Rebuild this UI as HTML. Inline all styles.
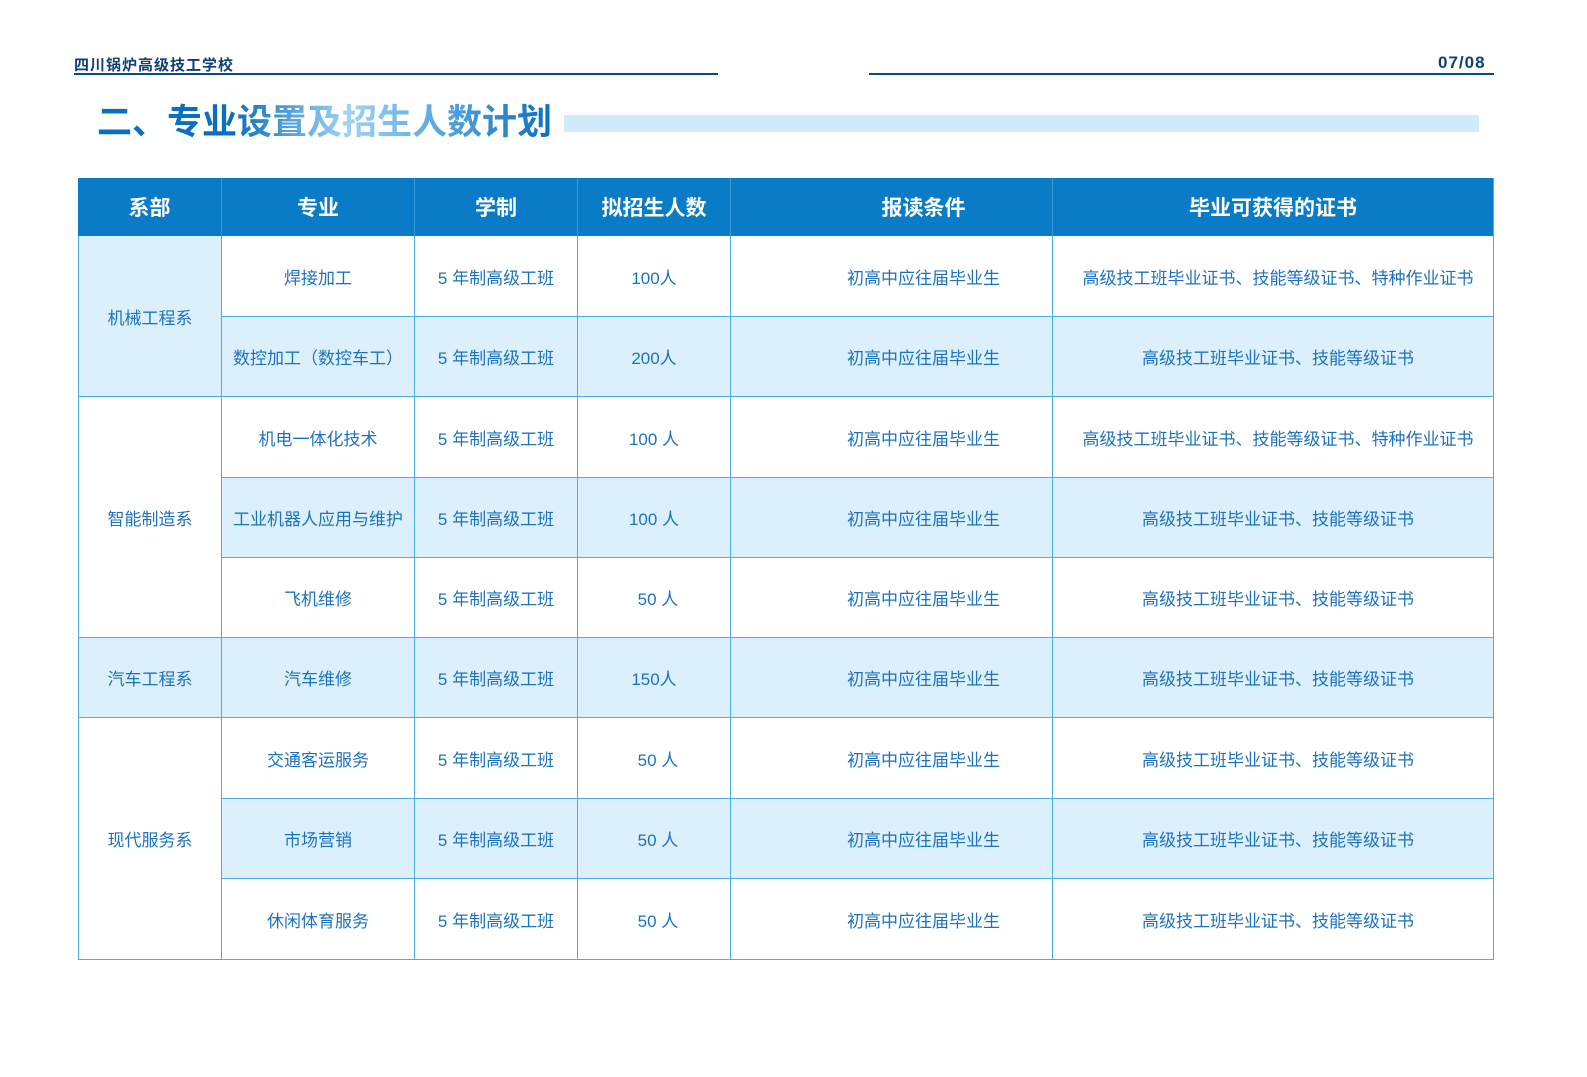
<!DOCTYPE html>
<html><head><meta charset="utf-8"><style>
*{margin:0;padding:0;box-sizing:border-box}
body{width:1587px;height:1077px;background:#fff;position:relative;overflow:hidden;font-family:"Liberation Sans","Noto Sans CJK SC",sans-serif}
.a{position:absolute}
.c{position:absolute;display:flex;align-items:center;justify-content:center;color:#1d72bf;font-size:17px;border-right:1px solid #4aaee0;border-bottom:1px solid #4aaee0}
.h{color:#fff;font-size:21px;font-weight:bold;background:#0a7bc6;border-right:1px solid #3a9ad8;border-bottom:none}
.l{background:#dcf0fb}
</style></head><body>
<div class="a" style="left:74px;top:54px;font-size:15px;font-weight:bold;color:#0d3f78;letter-spacing:1px">四川锅炉高级技工学校</div>
<div class="a" style="left:74px;top:73px;width:644px;height:2px;background:#0d4a85"></div>
<div class="a" style="left:869px;top:73px;width:625px;height:2px;background:#0d4a85"></div>
<div class="a" style="left:1438px;top:53px;font-size:17px;font-weight:bold;color:#0d3f78;letter-spacing:1px">07/08</div>
<div class="a" style="left:97px;top:101px;font-size:35px;font-weight:bold;line-height:44px;background:linear-gradient(90deg,#0a6fc0 0%,#0a6fc0 30%,#9fd4f4 55%,#5aa8e0 75%,#0a6fc0 100%);-webkit-background-clip:text;background-clip:text;color:transparent">二、专业设置及招生人数计划</div>
<div class="a" style="left:564px;top:115px;width:915px;height:17px;background:#d0ebf9"></div>

<div class="a" style="left:78px;top:178px;width:1416px;height:782px;border:1px solid #4aaee0;border-right:none;border-bottom:none"></div>
<div class="c h" style="left:78px;top:178px;width:144px;height:58px">系部</div>
<div class="c h" style="left:222px;top:178px;width:193px;height:58px">专业</div>
<div class="c h" style="left:415px;top:178px;width:163px;height:58px">学制</div>
<div class="c h" style="left:578px;top:178px;width:153px;height:58px">拟招生人数</div>
<div class="c h" style="left:731px;top:178px;width:322px;height:58px;padding-left:64px">报读条件</div>
<div class="c h" style="left:1053px;top:178px;width:441px;height:58px;border-right:1px solid #4aaee0">毕业可获得的证书</div>

<div class="c l" style="left:78px;top:236px;width:144px;height:161px;border-left:1px solid #4aaee0">机械工程系</div>
<div class="c" style="left:78px;top:397px;width:144px;height:241px;border-left:1px solid #4aaee0">智能制造系</div>
<div class="c l" style="left:78px;top:638px;width:144px;height:80px;border-left:1px solid #4aaee0">汽车工程系</div>
<div class="c" style="left:78px;top:718px;width:144px;height:242px;border-left:1px solid #4aaee0">现代服务系</div>

<div class="c" style="left:222px;top:236px;width:193px;height:81px">焊接加工</div>
<div class="c" style="left:415px;top:236px;width:163px;height:81px">5 年制高级工班</div>
<div class="c" style="left:578px;top:236px;width:153px;height:81px">100人</div>
<div class="c" style="left:731px;top:236px;width:322px;height:81px;padding-left:64px">初高中应往届毕业生</div>
<div class="c" style="left:1053px;top:236px;width:441px;height:81px;padding-left:10px">高级技工班毕业证书、技能等级证书、特种作业证书</div>

<div class="c l" style="left:222px;top:317px;width:193px;height:80px">数控加工（数控车工）</div>
<div class="c l" style="left:415px;top:317px;width:163px;height:80px">5 年制高级工班</div>
<div class="c l" style="left:578px;top:317px;width:153px;height:80px">200人</div>
<div class="c l" style="left:731px;top:317px;width:322px;height:80px;padding-left:64px">初高中应往届毕业生</div>
<div class="c l" style="left:1053px;top:317px;width:441px;height:80px;padding-left:10px">高级技工班毕业证书、技能等级证书</div>

<div class="c" style="left:222px;top:397px;width:193px;height:81px">机电一体化技术</div>
<div class="c" style="left:415px;top:397px;width:163px;height:81px">5 年制高级工班</div>
<div class="c" style="left:578px;top:397px;width:153px;height:81px">100 人</div>
<div class="c" style="left:731px;top:397px;width:322px;height:81px;padding-left:64px">初高中应往届毕业生</div>
<div class="c" style="left:1053px;top:397px;width:441px;height:81px;padding-left:10px">高级技工班毕业证书、技能等级证书、特种作业证书</div>

<div class="c l" style="left:222px;top:478px;width:193px;height:80px">工业机器人应用与维护</div>
<div class="c l" style="left:415px;top:478px;width:163px;height:80px">5 年制高级工班</div>
<div class="c l" style="left:578px;top:478px;width:153px;height:80px">100 人</div>
<div class="c l" style="left:731px;top:478px;width:322px;height:80px;padding-left:64px">初高中应往届毕业生</div>
<div class="c l" style="left:1053px;top:478px;width:441px;height:80px;padding-left:10px">高级技工班毕业证书、技能等级证书</div>

<div class="c" style="left:222px;top:558px;width:193px;height:80px">飞机维修</div>
<div class="c" style="left:415px;top:558px;width:163px;height:80px">5 年制高级工班</div>
<div class="c" style="left:578px;top:558px;width:153px;height:80px;padding-left:8px">50 人</div>
<div class="c" style="left:731px;top:558px;width:322px;height:80px;padding-left:64px">初高中应往届毕业生</div>
<div class="c" style="left:1053px;top:558px;width:441px;height:80px;padding-left:10px">高级技工班毕业证书、技能等级证书</div>

<div class="c l" style="left:222px;top:638px;width:193px;height:80px">汽车维修</div>
<div class="c l" style="left:415px;top:638px;width:163px;height:80px">5 年制高级工班</div>
<div class="c l" style="left:578px;top:638px;width:153px;height:80px">150人</div>
<div class="c l" style="left:731px;top:638px;width:322px;height:80px;padding-left:64px">初高中应往届毕业生</div>
<div class="c l" style="left:1053px;top:638px;width:441px;height:80px;padding-left:10px">高级技工班毕业证书、技能等级证书</div>

<div class="c" style="left:222px;top:718px;width:193px;height:81px">交通客运服务</div>
<div class="c" style="left:415px;top:718px;width:163px;height:81px">5 年制高级工班</div>
<div class="c" style="left:578px;top:718px;width:153px;height:81px;padding-left:8px">50 人</div>
<div class="c" style="left:731px;top:718px;width:322px;height:81px;padding-left:64px">初高中应往届毕业生</div>
<div class="c" style="left:1053px;top:718px;width:441px;height:81px;padding-left:10px">高级技工班毕业证书、技能等级证书</div>

<div class="c l" style="left:222px;top:799px;width:193px;height:80px">市场营销</div>
<div class="c l" style="left:415px;top:799px;width:163px;height:80px">5 年制高级工班</div>
<div class="c l" style="left:578px;top:799px;width:153px;height:80px;padding-left:8px">50 人</div>
<div class="c l" style="left:731px;top:799px;width:322px;height:80px;padding-left:64px">初高中应往届毕业生</div>
<div class="c l" style="left:1053px;top:799px;width:441px;height:80px;padding-left:10px">高级技工班毕业证书、技能等级证书</div>

<div class="c" style="left:222px;top:879px;width:193px;height:81px">休闲体育服务</div>
<div class="c" style="left:415px;top:879px;width:163px;height:81px">5 年制高级工班</div>
<div class="c" style="left:578px;top:879px;width:153px;height:81px;padding-left:8px">50 人</div>
<div class="c" style="left:731px;top:879px;width:322px;height:81px;padding-left:64px">初高中应往届毕业生</div>
<div class="c" style="left:1053px;top:879px;width:441px;height:81px;padding-left:10px">高级技工班毕业证书、技能等级证书</div>
</body></html>
